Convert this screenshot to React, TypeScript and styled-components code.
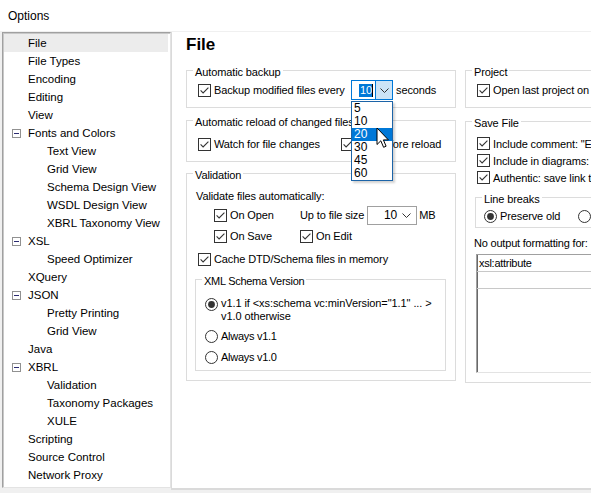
import React from 'react'
import styled, { createGlobalStyle } from 'styled-components'

const GlobalStyle = createGlobalStyle`
    html, body {
        margin: 0;
        padding: 0;
    }
    body {
        background: #f0f0f0;
        color: #000;
        font-family: "Liberation Sans", Arial, sans-serif;
    }
`

interface TreeItem {
    label: string
    depth: number
    expanded?: boolean
    selected?: boolean
}

const treeItems: TreeItem[] = [
    { label: 'File', depth: 0, selected: true },
    { label: 'File Types', depth: 0 },
    { label: 'Encoding', depth: 0 },
    { label: 'Editing', depth: 0 },
    { label: 'View', depth: 0 },
    { label: 'Fonts and Colors', depth: 0, expanded: true },
    { label: 'Text View', depth: 1 },
    { label: 'Grid View', depth: 1 },
    { label: 'Schema Design View', depth: 1 },
    { label: 'WSDL Design View', depth: 1 },
    { label: 'XBRL Taxonomy View', depth: 1 },
    { label: 'XSL', depth: 0, expanded: true },
    { label: 'Speed Optimizer', depth: 1 },
    { label: 'XQuery', depth: 0 },
    { label: 'JSON', depth: 0, expanded: true },
    { label: 'Pretty Printing', depth: 1 },
    { label: 'Grid View', depth: 1 },
    { label: 'Java', depth: 0 },
    { label: 'XBRL', depth: 0, expanded: true },
    { label: 'Validation', depth: 1 },
    { label: 'Taxonomy Packages', depth: 1 },
    { label: 'XULE', depth: 1 },
    { label: 'Scripting', depth: 0 },
    { label: 'Source Control', depth: 0 },
    { label: 'Network Proxy', depth: 0 },
]

const backupIntervals = ['5', '10', '20', '30', '45', '60']

const MinusBox = () => (
    <svg width="9" height="9" viewBox="0 0 9 9">
        <rect x="0.5" y="0.5" width="8" height="8" fill="#fff" stroke="#919191" />
        <path d="M2 4.5H7" stroke="#2c2c72" />
    </svg>
)

const CheckIcon = ({ checked = true }: { checked?: boolean }) => (
    <svg width="13" height="13" viewBox="0 0 13 13">
        <rect x="0.5" y="0.5" width="12" height="12" fill="#fff" stroke="#333" />
        {checked && <path d="M2.6 6.4L5.1 8.9L10.4 3.6" fill="none" stroke="#333" strokeWidth="1.1" />}
    </svg>
)

const RadioIcon = ({ checked = false }: { checked?: boolean }) => (
    <svg width="13" height="13" viewBox="0 0 13 13">
        <circle cx="6.5" cy="6.5" r="6" fill="#fff" stroke="#333" />
        {checked && <circle cx="6.5" cy="6.5" r="3.4" fill="#333" />}
    </svg>
)

const Chevron = () => (
    <svg width="9" height="5" viewBox="0 0 9 5">
        <path d="M0.5 0.5L4.5 4.5L8.5 0.5" fill="none" stroke="#333" />
    </svg>
)

const Pointer = () => (
    <CursorSvg width="14" height="22" viewBox="0 0 14 22">
        <path d="M1 1V17.5L4.8 13.8L7.6 20.3L10.1 19.2L7.4 12.9H12.4Z" fill="#fff" stroke="#000" strokeLinejoin="round" />
    </CursorSvg>
)

const Check = ({ children, checked = true, h = 16 }: { children: React.ReactNode; checked?: boolean; h?: number }) => (
    <OptionLabel $h={h}>
        <CheckIcon checked={checked} />
        <span>{children}</span>
    </OptionLabel>
)

const Radio = ({ children, checked = false }: { children: React.ReactNode; checked?: boolean }) => (
    <OptionLabel $h={16}>
        <RadioIcon checked={checked} />
        <span>{children}</span>
    </OptionLabel>
)

const App: React.FC = () => {
    return (
        <>
            <GlobalStyle />
            <Window>
                <TitleBar>Options</TitleBar>
                <Body>
                    <Tree>
                        {treeItems.map((item, i) => (
                            <TreeRow key={i} $depth={item.depth} $selected={!!item.selected}>
                                <Toggle>{item.expanded && <MinusBox />}</Toggle>
                                {item.label}
                            </TreeRow>
                        ))}
                    </Tree>

                    <Panel>
                        <Heading>File</Heading>
                        <Columns>
                            <Column>
                                <Group>
                                    <Legend>Automatic backup</Legend>
                                    <GroupBody $pt={1} $pb={7}>
                                        <BackupRow>
                                            <Check>Backup modified files every</Check>
                                            <ComboWrap>
                                                <EditCombo>
                                                    <EditValue>
                                                        <Selected>10</Selected>
                                                        <Caret />
                                                    </EditValue>
                                                    <ActiveButton>
                                                        <Chevron />
                                                    </ActiveButton>
                                                </EditCombo>
                                                <DropList>
                                                    {backupIntervals.map(v => (
                                                        <DropItem key={v} $active={v === '20'}>
                                                            {v}
                                                        </DropItem>
                                                    ))}
                                                    <Pointer />
                                                </DropList>
                                            </ComboWrap>
                                            <Unit>seconds</Unit>
                                        </BackupRow>
                                    </GroupBody>
                                </Group>

                                <Group $mt={4}>
                                    <Legend>Automatic reload of changed files</Legend>
                                    <GroupBody $pt={7} $pb={9}>
                                        <ReloadRow>
                                            <Check>Watch for file changes</Check>
                                            <Check>Ask before reload</Check>
                                        </ReloadRow>
                                    </GroupBody>
                                </Group>

                                <Group $mt={3}>
                                    <Legend>Validation</Legend>
                                    <GroupBody $pt={7} $pb={9}>
                                        <Caption $ml={-2}>Validate files automatically:</Caption>
                                        <ValidateGrid>
                                            <Check>On Open</Check>
                                            <SizeRow>
                                                <span>Up to file size</span>
                                                <SizeCombo>
                                                    <SizeValue>10</SizeValue>
                                                    <SizeButton>
                                                        <Chevron />
                                                    </SizeButton>
                                                </SizeCombo>
                                                <Unit $ml={2}>MB</Unit>
                                            </SizeRow>
                                            <Check>On Save</Check>
                                            <Check>On Edit</Check>
                                        </ValidateGrid>
                                        <Spaced $mt={7}>
                                            <Check>Cache DTD/Schema files in memory</Check>
                                        </Spaced>
                                        <Group $mt={4} $ml={-3}>
                                            <Legend $narrow>XML Schema Version</Legend>
                                            <GroupBody $pt={9} $pb={5} $pl={9} $pr={0}>
                                                <Narrow>
                                                    <TwoLineOption>
                                                        <RadioIcon checked />
                                                        <span>
                                                            v1.1 if &lt;xs:schema vc:minVersion="1.1" ... &gt;
                                                            <br />
                                                            v1.0 otherwise
                                                        </span>
                                                    </TwoLineOption>
                                                    <Spaced $mt={5}>
                                                        <Radio>Always v1.1</Radio>
                                                    </Spaced>
                                                    <Spaced $mt={5}>
                                                        <Radio>Always v1.0</Radio>
                                                    </Spaced>
                                                </Narrow>
                                            </GroupBody>
                                        </Group>
                                    </GroupBody>
                                </Group>
                            </Column>

                            <Column>
                                <Group>
                                    <Legend>Project</Legend>
                                    <GroupBody $pt={3} $pb={9}>
                                        <Check>Open last project on program start</Check>
                                    </GroupBody>
                                </Group>

                                <Group $mt={5}>
                                    <Legend>Save File</Legend>
                                    <GroupBody $pt={5} $pb={9}>
                                        <Check h={17}>Include comment: "Edited with XMLSpy"</Check>
                                        <Check h={17}>Include in diagrams: "Generated by XMLSpy"</Check>
                                        <Check h={17}>Authentic: save link to design file</Check>
                                        <Group $mt={3} $ml={-2}>
                                            <Legend>Line breaks</Legend>
                                            <GroupBody $pt={2} $pb={3} $pl={8}>
                                                <RadioGrid>
                                                    <Radio checked>Preserve old</Radio>
                                                    <Radio>Convert to:</Radio>
                                                </RadioGrid>
                                            </GroupBody>
                                        </Group>
                                        <Caption $ml={-3} $mt={8} $narrow>
                                            No output formatting for:
                                        </Caption>
                                        <ListBox>
                                            <ListRow>xsl:attribute</ListRow>
                                            <ListRow />
                                        </ListBox>
                                    </GroupBody>
                                </Group>
                            </Column>
                        </Columns>
                    </Panel>
                </Body>
            </Window>
        </>
    )
}

export default App

const Window = styled.div`
    width: 591px;
    height: 493px;
    display: flex;
    flex-direction: column;
    overflow: hidden;
    background: #f0f0f0;
`

const TitleBar = styled.div`
    height: 31px;
    flex-shrink: 0;
    display: flex;
    align-items: center;
    padding-left: 8px;
    background: #fff;
    font-size: 12px;
`

const Body = styled.div`
    flex: 1;
    min-height: 0;
    display: flex;
    padding: 1px 0 3px 2px;
`

const Tree = styled.ul`
    width: 169px;
    flex-shrink: 0;
    box-sizing: border-box;
    margin: 0 0 2px;
    padding: 1px 0 0;
    list-style: none;
    background: #fff;
    border: 1px solid;
    border-color: #a0a0a0 #e3e3e3 #e3e3e3 #a0a0a0;
    box-shadow: inset 1px 1px 0 #c8c8c8;
    font-size: 11.5px;
`

const TreeRow = styled.li<{ $depth: number; $selected: boolean }>`
    height: 18px;
    display: flex;
    align-items: center;
    margin: 0 2px 0 1px;
    padding-left: ${p => (p.$depth === 0 ? 8 : 27)}px;
    background: ${p => (p.$selected ? '#ececec' : 'transparent')};
    white-space: nowrap;
`

const Toggle = styled.span`
    width: 16px;
    height: 18px;
    flex-shrink: 0;
    display: flex;
    align-items: center;
`

const Panel = styled.div`
    flex: 1;
    min-width: 0;
    position: relative;
    overflow: hidden;
    padding: 3px 0 0 14px;
    background: #fff;
    border-left: 1px solid #dadada;
    border-bottom: 2px solid #dadada;
    font-size: 11px;
    letter-spacing: -0.12px;
`

const Heading = styled.h1`
    margin: 0;
    font-size: 17px;
    font-weight: bold;
    line-height: 20px;
    letter-spacing: 0;
`

const Columns = styled.div`
    display: flex;
    align-items: flex-start;
    gap: 9px;
    margin-top: 7px;
`

const Column = styled.div`
    width: 270px;
    flex-shrink: 0;
    display: flex;
    flex-direction: column;
`

const Group = styled.fieldset<{ $mt?: number; $ml?: number }>`
    min-width: 0;
    margin: ${p => p.$mt ?? 0}px 0 0 ${p => p.$ml ?? 0}px;
    padding: 0;
    border: 1px solid #dcdcdc;
`

const Legend = styled.legend<{ $narrow?: boolean }>`
    margin-left: 6px;
    padding: 3px 2px 0;
    line-height: 14px;
    letter-spacing: ${p => (p.$narrow ? '-0.28px' : 'inherit')};
`

const GroupBody = styled.div<{ $pt: number; $pb: number; $pl?: number; $pr?: number }>`
    padding: ${p => p.$pt}px ${p => p.$pr ?? 9}px ${p => p.$pb}px ${p => p.$pl ?? 11}px;
`

const OptionLabel = styled.label<{ $h: number }>`
    height: ${p => p.$h}px;
    display: flex;
    align-items: center;
    gap: 3px;
    white-space: nowrap;

    svg {
        flex-shrink: 0;
    }
`

const TwoLineOption = styled.label`
    display: flex;
    align-items: flex-start;
    gap: 3px;
    line-height: 13px;
    white-space: nowrap;
    letter-spacing: -0.08px;

    svg {
        flex-shrink: 0;
        margin-top: 1px;
    }
`

const Narrow = styled.div`
    letter-spacing: -0.28px;
`

const Spaced = styled.div<{ $mt: number }>`
    margin-top: ${p => p.$mt}px;
`

const Caption = styled.div<{ $ml?: number; $mt?: number; $narrow?: boolean }>`
    height: 14px;
    line-height: 14px;
    margin: ${p => p.$mt ?? 0}px 0 0 ${p => p.$ml ?? 0}px;
    letter-spacing: ${p => (p.$narrow ? '-0.2px' : 'inherit')};
    white-space: nowrap;
`

const Unit = styled.span<{ $ml?: number }>`
    margin-left: ${p => p.$ml ?? 3}px;
    white-space: nowrap;
`

const BackupRow = styled.div`
    display: grid;
    grid-template-columns: 153px 42px auto;
    align-items: center;
    height: 20px;
`

const ReloadRow = styled.div`
    display: grid;
    grid-template-columns: 143px auto;
    align-items: center;
`

const ComboWrap = styled.div`
    position: relative;
    height: 20px;
`

const EditCombo = styled.div`
    height: 20px;
    box-sizing: border-box;
    display: flex;
    border: 1px solid #0078d7;
    background: #fff;
`

const EditValue = styled.div`
    flex: 1;
    display: flex;
    align-items: center;
    justify-content: flex-end;
    padding-right: 2px;
`

const Selected = styled.span`
    line-height: 13px;
    padding: 0 0 0 1px;
    background: #0078d7;
    color: #fff;
`

const Caret = styled.span`
    width: 1px;
    height: 13px;
    background: #000;
`

const ActiveButton = styled.div`
    width: 16px;
    display: flex;
    align-items: center;
    justify-content: center;
    background: #cce4f7;
    border-left: 1px solid #0078d7;
`

const DropList = styled.div`
    position: absolute;
    top: calc(100% + 1px);
    left: 0;
    z-index: 10;
    width: 42px;
    box-sizing: border-box;
    border: 1px solid #1c64a8;
    background: #fff;
    box-shadow: 2px 2px 2px rgba(0, 0, 0, 0.18);
    font-size: 12px;
    letter-spacing: 0;
`

const DropItem = styled.div<{ $active: boolean }>`
    height: 13px;
    line-height: 13px;
    padding-left: 2px;
    background: ${p => (p.$active ? '#0078d7' : '#fff')};
    color: ${p => (p.$active ? '#fff' : '#000')};
`

const CursorSvg = styled.svg`
    position: absolute;
    left: 24px;
    top: 25px;
`

const ValidateGrid = styled.div`
    display: grid;
    grid-template-columns: 86px auto;
    grid-auto-rows: 20px 16px;
    row-gap: 3px;
    align-items: center;
    margin: 2px 0 0 16px;
`

const SizeRow = styled.div`
    display: flex;
    align-items: center;
    white-space: nowrap;
`

const SizeCombo = styled.div`
    width: 50px;
    height: 19px;
    box-sizing: border-box;
    display: flex;
    margin-left: 3px;
    border: 1px solid #a0a0a0;
    background: #fff;
`

const SizeValue = styled.div`
    flex: 1;
    display: flex;
    align-items: center;
    justify-content: flex-end;
    font-size: 12px;
    letter-spacing: 0;
`

const SizeButton = styled.div`
    width: 19px;
    display: flex;
    align-items: center;
    justify-content: center;
`

const RadioGrid = styled.div`
    display: grid;
    grid-template-columns: 94px 94px;
    align-items: center;
`

const ListBox = styled.div`
    width: 300px;
    height: 119px;
    box-sizing: border-box;
    margin: 4px 0 0 -1px;
    border: 1px solid;
    border-color: #a0a0a0 #e3e3e3 #e3e3e3 #a0a0a0;
    box-shadow: inset 1px 0 0 #696969;
    background: #fff;
    letter-spacing: -0.28px;
`

const ListRow = styled.div`
    height: 16px;
    line-height: 16px;
    padding-left: 2px;
    border-bottom: 1px solid #c8c8c8;
`
